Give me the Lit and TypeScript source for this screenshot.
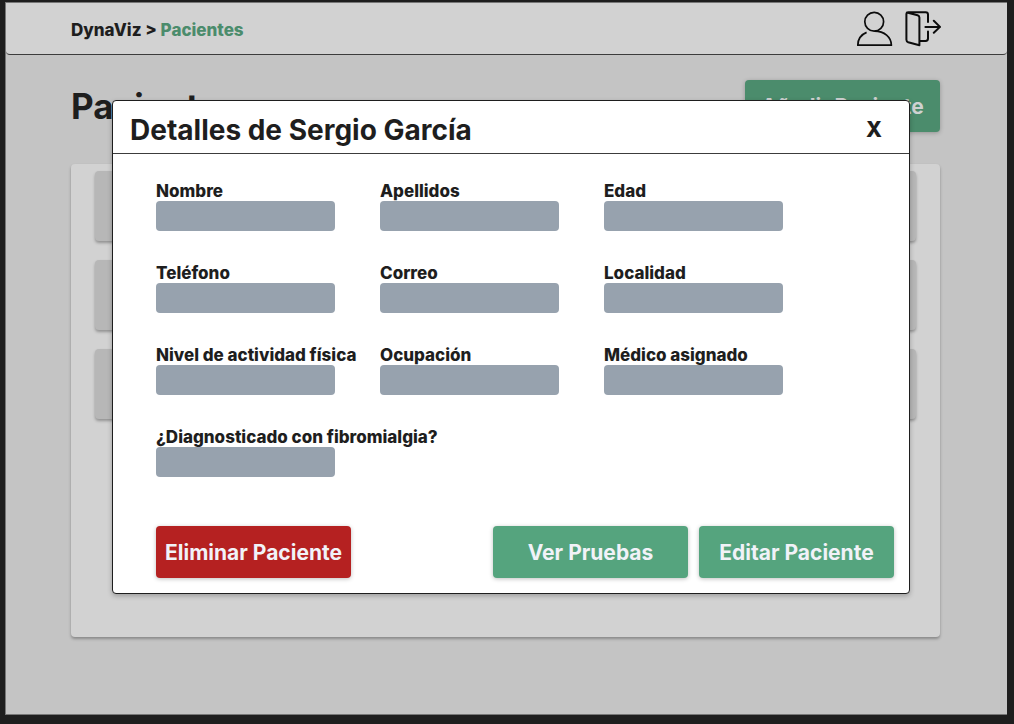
import { LitElement, html, css } from "lit";
import { customElement, state } from "lit/decorators.js";

interface Field {
  id: string;
  label: string;
}

const FIELDS: Field[] = [
  { id: "nombre", label: "Nombre" },
  { id: "apellidos", label: "Apellidos" },
  { id: "edad", label: "Edad" },
  { id: "telefono", label: "Teléfono" },
  { id: "correo", label: "Correo" },
  { id: "localidad", label: "Localidad" },
  { id: "actividad", label: "Nivel de actividad física" },
  { id: "ocupacion", label: "Ocupación" },
  { id: "medico", label: "Médico asignado" },
  { id: "diagnostico", label: "¿Diagnosticado con fibromialgia?" },
];

const buttonStyles = css`
  .btn {
    box-sizing: border-box;
    width: 195px;
    height: 52px;
    padding: 1px 0 0;
    border: 0;
    border-radius: 4px;
    background: #55a47e;
    color: #f1f2f8;
    font: 700 21px/28px Inter, sans-serif;
    white-space: nowrap;
    cursor: pointer;
    box-shadow: 0 1px 4px rgba(0, 0, 0, 0.25);
  }
  .btn.danger {
    background: #b52121;
  }
  .btn.dimmed {
    background: #4b8c6c;
    color: #cfd2d2;
  }
`;

@customElement("patient-dialog")
export class PatientDialog extends LitElement {
  static styles = [
    buttonStyles,
    css`
      :host {
        display: block;
      }
      .dialog {
        border: 1px solid #1e1e1e;
        border-radius: 4px;
        background: #fff;
        box-shadow: 0 2px 5px rgba(0, 0, 0, 0.25);
      }
      .head {
        display: flex;
        align-items: center;
        justify-content: space-between;
        height: 53px;
        padding: 5px 26px 0 17px;
        box-sizing: border-box;
        border-bottom: 1px solid #3c3c3c;
      }
      .title {
        margin: 0;
        font-size: 28px;
        line-height: 36px;
        font-weight: 700;
      }
      .close {
        padding: 0;
        width: 18px;
        border: 0;
        background: none;
        color: inherit;
        font: 800 21px/28px Inter, sans-serif;
        cursor: pointer;
      }
      .body {
        padding: 27px 15px 15px 43px;
      }
      .fields {
        display: grid;
        grid-template-columns: repeat(auto-fill, 179px);
        gap: 32px 45px;
        max-width: 640px;
      }
      .field {
        display: flex;
        flex-direction: column;
      }
      .label {
        font-size: 17px;
        line-height: 20px;
        font-weight: 800;
        white-space: nowrap;
      }
      .input {
        box-sizing: border-box;
        width: 100%;
        height: 30px;
        padding: 0 8px;
        border: 0;
        border-radius: 4px;
        background: #97a2ae;
        color: #1e1e1e;
        font: 500 16px Inter, sans-serif;
      }
      .actions {
        display: flex;
        gap: 11px;
        margin-top: 49px;
      }
      .actions .danger {
        margin-right: auto;
      }
    `,
  ];

  render() {
    return html`
      <section class="dialog" role="dialog" aria-labelledby="title">
        <header class="head">
          <h2 class="title" id="title">Detalles de Sergio García</h2>
          <button
            class="close"
            type="button"
            @click=${() => this.dispatchEvent(new CustomEvent("close"))}
          >X</button>
        </header>
        <div class="body">
          <div class="fields">
            ${FIELDS.map(
              (f) => html`
                <div class="field">
                  <label class="label" for=${f.id}>${f.label}</label>
                  <input class="input" id=${f.id} type="text" />
                </div>
              `
            )}
          </div>
          <div class="actions">
            <button class="btn danger" type="button">Eliminar Paciente</button>
            <button class="btn" type="button">Ver Pruebas</button>
            <button class="btn" type="button">Editar Paciente</button>
          </div>
        </div>
      </section>
    `;
  }
}

@customElement("app-root")
export class AppRoot extends LitElement {
  @state() private open = true;

  static styles = [
    buttonStyles,
    css`
      :host {
        display: flex;
        box-sizing: border-box;
        min-height: 100vh;
        padding: 2px 7px 9px 5px;
        background: #1e1e1e;
        color: #1e1e1e;
        font-family: Inter, sans-serif;
      }
      .page {
        position: relative;
        flex: 1;
        display: flex;
        flex-direction: column;
        box-sizing: border-box;
        border: 1px solid #777;
        border-right: 0;
        background: #c4c4c4;
      }
      .topbar {
        display: flex;
        align-items: center;
        justify-content: space-between;
        box-sizing: border-box;
        height: 52px;
        padding: 0 66px 0 65px;
        border-bottom: 1px solid #3c3c3c;
        border-radius: 0 0 4px 4px;
        background: #d2d2d2;
      }
      .crumbs {
        padding-top: 2px;
        font-size: 17px;
        line-height: 24px;
        font-weight: 800;
      }
      .current {
        color: #4b8c6c;
        text-decoration: none;
      }
      .tools {
        display: flex;
        gap: 12px;
      }
      .tool {
        display: block;
        padding: 0;
        border: 0;
        background: none;
        color: #0c0c0c;
        cursor: pointer;
      }
      .tool svg {
        display: block;
      }
      .main {
        flex: 1;
        display: flex;
        flex-direction: column;
        padding: 25px 67px 77px 65px;
      }
      .heading {
        display: flex;
        align-items: center;
        justify-content: space-between;
        margin-bottom: 32px;
      }
      .title {
        margin: 0;
        font-size: 35px;
        line-height: 52px;
        font-weight: 700;
      }
      .list {
        flex: 1;
        display: flex;
        flex-direction: column;
        gap: 19px;
        margin: 0;
        padding: 7px 24px;
        list-style: none;
        border-radius: 4px;
        background: #d2d2d2;
        box-shadow: 0 2px 3px rgba(0, 0, 0, 0.3);
      }
      .row {
        height: 70px;
        border-radius: 4px;
        background: #b7b7b7;
        box-shadow: 0 2px 3px rgba(0, 0, 0, 0.3);
      }
      .overlay {
        position: absolute;
        inset: 97px 97px auto 106px;
      }
    `,
  ];

  render() {
    return html`
      <div class="page">
        <header class="topbar">
          <nav class="crumbs">
            DynaViz &gt; <a class="current" href="#pacientes">Pacientes</a>
          </nav>
          <div class="tools">
            <button class="tool" type="button" aria-label="Perfil">
              <svg width="37" height="36" viewBox="0 0 37 36" fill="none" stroke="currentColor" stroke-width="1.7">
                <circle cx="18.2" cy="10.8" r="9.4" />
                <path d="M10.6 21.4C5 23.7 1.9 28.4 1.8 34.2H35.4C35.2 26.2 28.4 20.2 18.6 20.2" stroke-linejoin="round" />
              </svg>
            </button>
            <button class="tool" type="button" aria-label="Cerrar sesión">
              <svg width="36" height="36" viewBox="0 0 36 36" fill="none" stroke="currentColor" stroke-width="2" stroke-linecap="round" stroke-linejoin="round">
                <path d="M2 1.6L12.6 4.2Q14.4 4.8 14.4 6.6V34.2L3.2 31.2Q1.4 30.6 1.4 28.8V3.2Q1.4 1.2 3.4 1.2H20.6Q23 1.2 23 3.6V11" />
                <path d="M15 30H20.6Q23 30 23 27.6V20.4" />
                <path d="M20.4 15.9H35M28.8 9.8L35 15.9L28.8 21.8" />
              </svg>
            </button>
          </div>
        </header>
        <main class="main">
          <div class="heading">
            <h1 class="title">Pacientes</h1>
            <button class="btn dimmed" type="button">Añadir Paciente</button>
          </div>
          <ul class="list">
            ${[0, 1, 2].map(() => html`<li class="row"></li>`)}
          </ul>
        </main>
        ${this.open
          ? html`<patient-dialog class="overlay" @close=${() => (this.open = false)}></patient-dialog>`
          : null}
      </div>
    `;
  }
}
